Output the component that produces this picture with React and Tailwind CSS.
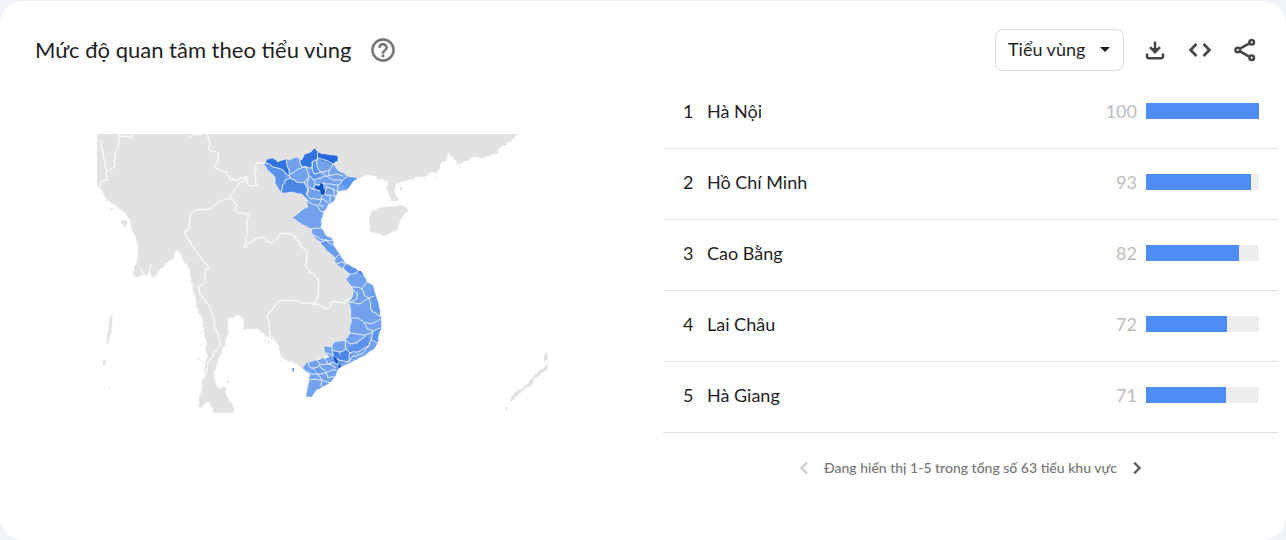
import { useState } from "react";

const REGIONS = [
  { name: "Hà Nội", value: 100 },
  { name: "Hồ Chí Minh", value: 93 },
  { name: "Cao Bằng", value: 82 },
  { name: "Lai Châu", value: 72 },
  { name: "Hà Giang", value: 71 },
];

// Subdivides a polyline with small deterministic offsets so coasts look natural.
function rough(points, amp, step, close) {
  const pts = points.trim().split(/\s+/).map((p) => p.split(",").map(Number));
  const last = close ? pts.length : pts.length - 1;
  let d = "";
  for (let i = 0; i < last; i++) {
    const [x1, y1] = pts[i];
    const [x2, y2] = pts[(i + 1) % pts.length];
    const len = Math.hypot(x2 - x1, y2 - y1) || 1;
    const n = Math.max(1, Math.round(len / step));
    for (let k = 0; k < n; k++) {
      const t = k / n;
      const seed = Math.sin(x1 * 12.9 + y1 * 78.2 + k * 37.7) * 43758.5;
      const o = k === 0 ? 0 : (seed - Math.floor(seed) - 0.5) * 2 * amp;
      const x = x1 + (x2 - x1) * t - ((y2 - y1) / len) * o;
      const y = y1 + (y2 - y1) * t + ((x2 - x1) / len) * o;
      d += (d ? "L" : "M") + x.toFixed(1) + " " + y.toFixed(1);
    }
  }
  const end = pts[pts.length - 1];
  return close ? d + "Z" : d + "L" + end[0] + " " + end[1];
}

const MAINLAND =
  "92,130 524,130 520,134 514,138 512,141 507,142 505,146 500,148 498,151 497,154 488,157 479,158 472,157 469,161 463,162 457,165 455,160 453,158 450,156 448,152 447,160 444,161 441,164 440,169 438,172 430,173 426,176 420,177 410,179 402,182 396,184 394,190 396,195 399,198 397,201 392,201 389,197 387,190 388,182 383,179 377,179 374,176 368,175 362,177 357,178 350,181 344,188 336,190 331,200 326,203 322,211 318,220 317,232 326,243 335,258 347,269 357,279 365,295 368,310 366,335 345,350 310,362 302,368 298,365 285,360 281,357 280,353 278,345 273,340 265,335 263,333 257,329 250,330 243,329 243,316 230,317 227,320 228,328 227,338 222,350 218,362 214,372 215,383 218,388 225,387 227,397 232,403 235,417 215,417 212,407 208,402 205,401 203,406 200,410 199,397 202,385 205,372 207,358 206,346 205,335 202,317 196,307 193,290 190,272 188,268 183,260 180,253 177,250 175,252 174,258 169,261 165,265 158,272 155,277 152,278 150,272 147,277 144,273 141,276 135,277 133,272 137,260 138,250 137,240 135,235 131,228 130,220 126,214 122,210 117,206 110,202 106,198 103,192 97,185 92,181";

const BORDERS = [
  "97,141 102,142 103,155 106,168 107,180 100,183 99,189",
  "119,134 118,145 115,155 114,167 108,171",
  "119,136 132,138 133,134",
  "187,138 193,135 202,134",
  "207,134 209,140 209,150 219,153 218,160 215,168 227,172 230,180 238,180 246,176 248,185 257,185 255,175 257,163 265,164",
  "246,178 238,185 234,190 230,198 218,202 212,208 204,209 196,210 191,214 190,220 190,228 184,231 189,240 195,250 205,263 209,268 205,272 204,283 198,287 200,295 211,307 214,322 217,332 221,345 208,362 205,375",
  "230,198 235,203 237,212 248,213 247,223 247,235 244,248 254,240 262,237 272,243 282,233 293,235 300,245 307,252 305,265 312,273 319,280 318,298 313,304 296,301 278,302 272,310 267,317 269,330 275,345",
  "313,304 318,304 325,309 328,308 334,301 342,303 350,299",
];

const VIETNAM =
  "358,178 350,177 347,176 341,172 336,168 333,164 338,161 338,156 330,155 322,154 318,152 315,148 311,152 305,154 302,160 297,157 290,160 286,159 278,162 272,158 267,159 264,165 270,172 275,177 275,183 278,188 282,193 293,192 302,194 306,198 308,207 300,212 292,218 300,223 312,229 312,234 320,242 325,248 330,253 335,258 336,264 343,269 350,274 346,279 352,287 353,295 349,303 351,315 351,323 350,333 345,340 333,343 331,347 324,346 325,353 329,357 317,360 308,362 302,368 306,372 310,375 308,385 306,397 312,397 315,392 322,387 330,383 335,377 337,371 341,367 352,362 362,357 373,350 378,343 379,335 381,330 381,320 379,305 376,295 373,285 367,282 363,273 355,268 345,262 340,254 333,245 333,239 325,234 321,227 321,220 324,212 328,205 333,202 338,192 347,190 352,183";

const SHADES = [
  ["#5b93eb", "262,164 272,167 281,170 285,176 284,190 280,196 270,185"],
  ["#3173dd", "263,156 272,156 278,162 286,157 288,168 290,178 283,171 273,167 266,163"],
  ["#3173dd", "303,153 311,151 315,147 318,153 317,160 312,161 312,168 302,167 300,163"],
  ["#2469db", "317,151 340,154 340,162 333,165 325,161 317,158"],
  ["#4d87e5", "289,177 296,182 304,182 308,195 305,199 293,193 281,195 284,181"],
  ["#5b93eb", "311,162 317,158 318,170 321,176 314,180 310,174"],
  ["#5b93eb", "344,178 360,176 348,188 341,184"],
  ["#6499ec", "320,241 333,244 341,254 335,260 329,253"],
  ["#5b93eb", "344,267 350,263 356,268 356,274 349,275"],
  ["#6499ec", "371,290 377,298 380,313 373,311 369,297"],
  ["#5b93eb", "373,332 381,328 378,343 371,341"],
  ["#5b93eb", "348,348 358,343 368,336 369,346 360,351 350,353"],
  ["#4d87e5", "341,353 348,349 351,356 348,362 340,363 339,358"],
  ["#3f7de1", "332,350 338,352 340,358 334,355"],
  ["#5b93eb", "312,370 318,369 321,374 315,374"],
];

const PROVINCES = [
  "266,163 273,167 283,170 290,178 285,180 281,193",
  "286,159 288,168 290,177 296,182 304,182 308,188 307,196",
  "290,174 298,169 306,166 309,176 304,182",
  "298,157 300,163 302,167 312,168 312,162 317,160 318,152",
  "317,158 325,160 333,164 329,170 321,172 317,166 317,160",
  "312,168 314,174 321,172 326,176 333,180 342,181 347,177",
  "329,170 328,176 337,174 343,176",
  "309,176 314,180 321,178 326,176",
  "309,178 307,184 312,189 315,185 314,180",
  "315,185 323,183 327,187 324,194 317,190 312,189",
  "308,188 306,194 311,199 321,199 324,194",
  "323,183 331,184 338,185 342,181",
  "327,187 333,189 338,192 338,185",
  "324,194 330,195 335,197 333,189",
  "321,199 326,201 330,205 330,195",
  "302,196 310,203 317,205 322,212 325,211",
  "321,199 319,205 324,206",
  "309,229 315,228 322,228",
  "312,234 318,237 323,240 333,240",
  "320,242 326,240 332,245",
  "335,259 337,256 341,254",
  "336,264 342,262 346,264 343,268 349,274",
  "349,274 356,273 361,270",
  "348,287 355,287 362,289 367,282",
  "353,289 358,294 357,299 350,303",
  "362,289 365,296 369,298 374,296",
  "350,302 358,304 364,301 369,298 371,310 380,316",
  "350,319 358,318 364,323 371,324 380,319",
  "364,323 367,329 373,331 380,328",
  "350,333 357,334 365,335 373,331 371,340 378,343",
  "345,340 350,344 357,343 365,336",
  "345,340 346,349 350,353 360,351 369,346 371,340",
  "333,343 332,350 340,352 347,349",
  "332,350 334,357 339,360 348,362 350,353",
  "325,353 332,355 336,362 340,367",
  "348,362 353,356 362,354 368,347",
  "317,360 320,364 328,364 336,363",
  "308,362 311,368 318,367 320,364",
  "306,371 313,374 321,374 330,371 336,370",
  "313,368 317,374 322,380 330,383",
  "320,366 326,372 328,378 335,377",
  "309,380 316,379 322,380 321,386",
  "324,358 328,364 336,368",
];

const ISLES = [
  "371,212 378,208 386,207 394,206 401,205 406,207 408,211 404,214 400,221 398,229 391,233 385,236 378,234 370,231 369,222",
  "110,316 113,315 112,325 111,333 108,345 106,343 108,333 109,325",
  "103,361 105,359 106,362 104,366 103,365",
  "121,221 126,220 128,223 124,225 121,223",
  "510,403 511,398 515,392 523,388 529,382 534,376 539,371 546,366 548,361 548,368 541,374 535,378 532,385 525,389 519,394 513,400",
  "544,356 547,352 548,359 544,363",
  "505,408 507,406 507,410",
];

const SPECKS =
  "M200 332h1v2h-1zM203 343h1v2h-1zM199 345h2v1h-2zM198 358h1v2h-1zM203 362h1v2h-1zM109 387h1v2h-1zM119 408h1v1h-1zM122 401h1v1h-1zM205 402h1v2h-1zM197 370h1v1h-1zM227 381h2v2h-2zM113 341h1v1h-1zM111 208h2v2h-2zM124 225h2v2h-2zM105 200h2v1h-2zM434 177h2v1h-2zM459 167h2v1h-2zM265 339h1v3h-1zM280 361h2v1h-2zM424 178h2v1h-2zM400 187h2v3h-2zM268 341h1v3h-1z";

function RegionMap() {
  return (
    <svg viewBox="97 134 451 279" className="block w-full" role="img" aria-label="Bản đồ Việt Nam">
      <defs>
        <clipPath id="country">
          <path d={rough(VIETNAM, 0.7, 3, true)} />
        </clipPath>
      </defs>
      <g fill="#e2e2e2">
        <path d={rough(MAINLAND, 1.2, 2, true)} />
        {ISLES.map((p) => (
          <path key={p} d={rough(p, 0.6, 2, true)} />
        ))}
        <path d={SPECKS} />
      </g>
      <g fill="none" stroke="#fafafa" strokeWidth="1.3" strokeLinejoin="round">
        {BORDERS.map((p) => (
          <path key={p} d={rough(p, 1.2, 3, false)} />
        ))}
        <path d={rough("151,264 149,270 150,277", 0.5, 2, false)} />
        <path d={rough("140,268 143,273 144,278", 0.5, 2, false)} />
        <path d={rough("185,263 188,268 190,272", 0.5, 2, false)} />
      </g>
      <g clipPath="url(#country)">
        <rect x="255" y="140" width="135" height="265" fill="#72a2ee" />
        {SHADES.map(([fill, p]) => (
          <path key={p} fill={fill} d={rough(p, 0.5, 3, true)} />
        ))}
        <g fill="none" stroke="#e8effb" strokeWidth="1" strokeLinejoin="round">
          {PROVINCES.map((p) => (
            <path key={p} d={rough(p, 0.8, 3, false)} />
          ))}
        </g>
        <path fill="#0d50c4" d="M315 185L319 187L321 183L323 184L323 188L325 191L324 195L321 194L320 190L316 189Z" />
        <path fill="#0d50c4" d="M333 355L336 358L338 361L337 364L335 362L334 359ZM339 364L341 366L340 368L338 367Z" />
      </g>
      <path d={rough(VIETNAM, 0.7, 3, true)} fill="none" stroke="#ffffff" strokeOpacity="0.55" strokeWidth="0.7" />
      <path fill="#3f7de1" d="M358 271L361 271L362 274L360 274Z" />
      <path fill="#72a2ee" d="M292 368L294 368L294 372L293 372Z" />
    </svg>
  );
}

function IconButton({ label, children, disabled, className = "text-[#444746]" }) {
  return (
    <button type="button" aria-label={label} disabled={disabled} className={`flex size-6 items-center justify-center ${className}`}>
      {children}
    </button>
  );
}

function MaterialIcon({ d, size = "size-6", stroke }) {
  return (
    <svg viewBox="0 0 24 24" className={size} fill="currentColor" stroke={stroke ? "currentColor" : "none"} strokeWidth={stroke} aria-hidden="true">
      <path d={d} />
    </svg>
  );
}

export default function App() {
  const [view, setView] = useState("sub");
  return (
    <div className="flex min-h-screen flex-col bg-[#f0f4f9] pt-px font-['Lato','Noto_Sans',sans-serif] text-[#1f1f1f]">
      <main className="flex-1 rounded-3xl bg-white">
        <header className="flex items-center justify-between pt-7 pr-[29px] pl-[35px]">
          <div className="flex items-center gap-5">
            <h1 className="text-[22px] leading-8">Mức độ quan tâm theo tiểu vùng</h1>
            <IconButton label="Trợ giúp" className="text-[#757575]">
              <MaterialIcon
                size="size-7 shrink-0"
                stroke="0.3"
                d="M11 18h2v-2h-2v2zm1-16C6.48 2 2 6.48 2 12s4.480 10 10 10 10-4.480 10-10S17.520 2 12 2zm0 18c-4.410 0-8-3.590-8-8s3.590-8 8-8 8 3.590 8 8-3.590 8-8 8zm0-14c-2.210 0-4 1.790-4 4h2c0-1.100.9-2 2-2s2 .9 2 2c0 2-3 1.750-3 5h2c0-2.250 3-2.500 3-5 0-2.210-1.790-4-4-4z"
              />
            </IconButton>
          </div>
          <div className="flex items-center gap-[19px]">
            <div className="relative">
              <select
                aria-label="Chế độ xem"
                value={view}
                onChange={(e) => setView(e.target.value)}
                className="h-[42px] w-[129px] appearance-none rounded-lg border border-[#dadce0] bg-white pb-0.5 pl-3 text-lg"
              >
                <option value="sub">Tiểu vùng</option>
              </select>
              <svg viewBox="0 0 10 5" className="pointer-events-none absolute top-[18px] right-3.5 w-2.5" aria-hidden="true">
                <path d="M0 0h10L5 5z" fill="#1f1f1f" />
              </svg>
            </div>
            <div className="flex items-center gap-[21px]">
              <IconButton label="Tải xuống">
                <svg viewBox="0 0 24 24" className="size-6" fill="none" stroke="currentColor" strokeWidth="2.500" aria-hidden="true">
                  <path d="M12 3.500v9M4 15.500v3a1.700 1.700 0 0 0 1.700 1.700h12.600a1.700 1.700 0 0 0 1.700-1.700v-3" />
                  <path d="M7 9.200l5 5 5-5" />
                  <path d="M8.500 10h7L12 13.500z" fill="currentColor" stroke="none" />
                </svg>
              </IconButton>
              <IconButton label="Nhúng">
                <svg viewBox="0 0 24 24" className="size-6" fill="none" stroke="currentColor" strokeWidth="2.700" aria-hidden="true">
                  <path d="M8.500 6L2.500 12l6 6M15.500 6l6 6-6 6" />
                </svg>
              </IconButton>
              <IconButton label="Chia sẻ">
                <svg viewBox="0 0 24 24" className="size-6" fill="none" stroke="currentColor" strokeWidth="2.500" aria-hidden="true">
                  <path d="M7 10.700L16.300 5.400M7 13.300L16.300 18.600" />
                  <circle cx="4.800" cy="12" r="2.300" />
                  <circle cx="18.700" cy="4.200" r="2.300" />
                  <circle cx="18.700" cy="19.800" r="2.300" />
                </svg>
              </IconButton>
            </div>
          </div>
        </header>

        <div className="grid grid-cols-[1fr_615px] gap-5 pt-[7px] pr-2">
          <section className="pt-14 pr-[95px] pl-[97px]">
            <RegionMap />
          </section>
          <section>
            <ol>
              {REGIONS.map((r, i) => (
                <li key={r.name} className="flex h-[71px] items-center border-b border-[#e0e0e0] pr-[19px] pb-1 pl-5 text-lg">
                  <span className="w-6">{i + 1}</span>
                  <span className="flex-1">{r.name}</span>
                  <span className="pr-[9px] text-[#bdbdbd]">{r.value}</span>
                  <div className="h-4 w-[113px] bg-[#eeeeee]">
                    <div className="h-full bg-[#4e8df7]" style={{ width: `${r.value}%` }} />
                  </div>
                </li>
              ))}
            </ol>
            <nav aria-label="Phân trang" className="flex items-center justify-center gap-2 pt-[23px]">
              <IconButton label="Trang trước" disabled className="text-[#cfcfcf]">
                <MaterialIcon stroke="0.5" d="M15.410 7.410L14 6l-6 6 6 6 1.410-1.410L10.830 12z" />
              </IconButton>
              <p className="text-sm font-medium text-[#757575]">Đang hiển thị 1-5 trong tổng số 63 tiểu khu vực</p>
              <IconButton label="Trang sau" className="text-[#616161]">
                <MaterialIcon stroke="0.5" d="M10 6L8.590 7.410 13.170 12l-4.580 4.590L10 18l6-6z" />
              </IconButton>
            </nav>
          </section>
        </div>
      </main>
    </div>
  );
}
